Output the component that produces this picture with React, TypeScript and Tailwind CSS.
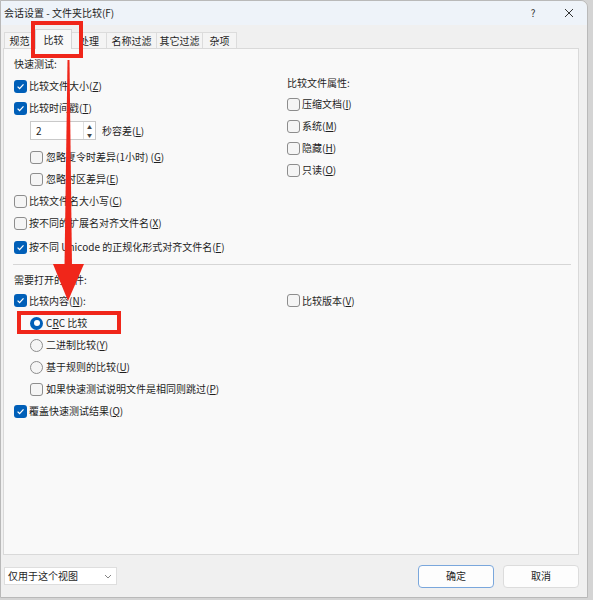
import type { ReactNode } from "react";

function Box({ checked }: { checked?: boolean }) {
    if (checked) {
        return (
            <span className="flex h-[13px] w-[13px] shrink-0 items-center justify-center rounded-[3px] bg-[#005fb8]">
                <svg width="9" height="9" viewBox="0 0 9 9">
                    <path d="M1.6 4.6 L3.6 6.6 L7.5 2.4" fill="none" stroke="white" strokeWidth="1.3" />
                </svg>
            </span>
        );
    }
    return <span className="h-[13px] w-[13px] shrink-0 rounded-[3px] border border-[#8d8d8d] bg-[#f5f5f5]" />;
}

function Radio({ checked }: { checked?: boolean }) {
    if (checked) {
        return (
            <span className="flex h-[13px] w-[13px] shrink-0 items-center justify-center rounded-full bg-[#005fb8]">
                <span className="h-[6px] w-[6px] rounded-full bg-white" />
            </span>
        );
    }
    return <span className="h-[13px] w-[13px] shrink-0 rounded-full border border-[#8d8d8d] bg-[#f5f5f5]" />;
}

function Row({ children, h = "h-[22px]", indent = false, className = "" }: { children: ReactNode; h?: string; indent?: boolean; className?: string }) {
    return (
        <div className={`flex items-center gap-[2px] ${h} ${indent ? "pl-[16px]" : ""} ${className}`}>
            {children}
        </div>
    );
}

const U = ({ c }: { c: string }) => <span className="underline">{c}</span>;

const tabs = [
    { label: "规范", w: "w-[31px]" },
    { label: "比较", w: "w-[37px]", active: true },
    { label: "处理", w: "w-[35px]" },
    { label: "名称过滤", w: "w-[50px]" },
    { label: "其它过滤", w: "w-[46px]" },
    { label: "杂项", w: "w-[34px]" },
];

export default function App() {
    return (
        <div className="relative h-[600px] w-[593px] overflow-hidden bg-[#d4d4d4] font-['Noto_Sans_CJK_SC',sans-serif] text-[10px] leading-none text-[#1f1f1f]">
            <div className="flex h-[598px] w-[588px] flex-col rounded-tr-[7px] border border-[#b9b9b9] bg-[#f0f0f0]">
                {/* title bar */}
                <div className="flex h-[24px] items-center rounded-tr-[7px] bg-[#eef3f9] pl-[3px]">
                    <span>会话设置 - 文件夹比较(F)</span>
                    <span className="ml-auto flex w-[36px] justify-center text-[10px] text-[#333]">?</span>
                    <span className="flex w-[36px] justify-center">
                        <svg width="10" height="10" viewBox="0 0 10 10">
                            <path d="M1 1 L9 9 M9 1 L1 9" stroke="#333" strokeWidth="1" />
                        </svg>
                    </span>
                </div>

                {/* tabs */}
                <div className="flex h-[23px] items-end pl-[3px]">
                    {tabs.map((t) =>
                        t.active ? (
                            <div
                                key={t.label}
                                className={`relative z-10 -mb-px flex h-[20px] ${t.w} items-center justify-center border border-b-0 border-[#d5d5d5] bg-[#f9f9f9]`}
                            >
                                {t.label}
                            </div>
                        ) : (
                            <div
                                key={t.label}
                                className={`flex h-[16px] ${t.w} items-center justify-center border border-b-0 border-l-0 border-[#dcdcdc] bg-[#f4f4f4] first:border-l`}
                            >
                                {t.label}
                            </div>
                        )
                    )}
                </div>

                {/* panel */}
                <div className="ml-[2px] h-[507px] w-[576px] border border-[#d9d9d9] bg-[#f9f9f9]">
                    <div className="flex pl-[10px]">
                        <div className="w-[273px] pt-[4px]">
                            <Row>快速测试:</Row>
                            <Row>
                                <Box checked />
                                <span>比较文件大小(<U c="Z" />)</span>
                            </Row>
                            <Row>
                                <Box checked />
                                <span>比较时间戳(<U c="T" />)</span>
                            </Row>
                            <div className="flex items-center py-[2px] pl-[16px]">
                                <div className="flex h-[19px] w-[66px] items-stretch border border-[#c9c9c9] bg-white">
                                    <span className="flex flex-1 items-center pl-[5px] text-[10px]">2</span>
                                    <span className="flex w-[12px] flex-col border-l border-[#e0e0e0]">
                                        <span className="flex flex-1 items-center justify-center text-[5px] text-[#444]">▲</span>
                                        <span className="flex flex-1 items-center justify-center text-[5px] text-[#444]">▼</span>
                                    </span>
                                </div>
                                <span className="ml-[6px]">秒容差(<U c="L" />)</span>
                            </div>
                            <Row indent className="mt-[4px]">
                                <Box />
                                <span className="ml-[1px]">忽略夏令时差异(1小时) (<U c="G" />)</span>
                            </Row>
                            <Row indent>
                                <Box />
                                <span className="ml-[1px]">忽略时区差异(<U c="E" />)</span>
                            </Row>
                            <Row>
                                <Box />
                                <span>比较文件名大小写(<U c="C" />)</span>
                            </Row>
                            <Row>
                                <Box />
                                <span>按不同的扩展名对齐文件名(<U c="X" />)</span>
                            </Row>
                        </div>
                        <div className="pt-[24px]">
                            <Row h="h-[20px]">比较文件属性:</Row>
                            <Row>
                                <Box />
                                <span>压缩文档(<U c="I" />)</span>
                            </Row>
                            <Row>
                                <Box />
                                <span>系统(<U c="M" />)</span>
                            </Row>
                            <Row>
                                <Box />
                                <span>隐藏(<U c="H" />)</span>
                            </Row>
                            <Row>
                                <Box />
                                <span>只读(<U c="O" />)</span>
                            </Row>
                        </div>
                    </div>
                    <div className="pl-[10px] pt-[2px]">
                        <Row>
                            <Box checked />
                            <span className="whitespace-nowrap">按不同 Unicode 的正规化形式对齐文件名(<U c="F" />)</span>
                        </Row>
                    </div>

                    <div className="mr-[7px] ml-[9px] mt-[6px] h-px bg-[#d6d6d6]" />

                    <div className="flex pl-[10px] pt-[5px]">
                        <div className="w-[273px]">
                            <Row h="h-[20px]">需要打开的文件:</Row>
                            <Row h="h-[21px]">
                                <Box checked />
                                <span>比较内容(<U c="N" />):</span>
                            </Row>
                            <Row indent className="mt-[1px]">
                                <Radio checked />
                                <span className="ml-[1px]">C<U c="R" />C 比较</span>
                            </Row>
                            <Row indent>
                                <Radio />
                                <span className="ml-[1px]">二进制比较(<U c="Y" />)</span>
                            </Row>
                            <Row indent>
                                <Radio />
                                <span className="ml-[1px]">基于规则的比较(<U c="U" />)</span>
                            </Row>
                            <Row indent>
                                <Box />
                                <span className="ml-[1px] whitespace-nowrap">如果快速测试说明文件是相同则跳过(<U c="P" />)</span>
                            </Row>
                            <Row>
                                <Box checked />
                                <span>覆盖快速测试结果(<U c="Q" />)</span>
                            </Row>
                        </div>
                        <div className="pt-[20px]">
                            <Row h="h-[21px]">
                                <Box />
                                <span>比较版本(<U c="V" />)</span>
                            </Row>
                        </div>
                    </div>
                </div>

                {/* bottom bar */}
                <div className="flex flex-1 items-center pl-[3px] pr-[8px]">
                    <div className="flex h-[18px] w-[113px] items-center border border-[#dedede] bg-white pl-[3px] pr-[4px]">
                        <span>仅用于这个视图</span>
                        <svg className="ml-auto" width="8" height="5" viewBox="0 0 8 5">
                            <path d="M1 1 L4 4 L7 1" fill="none" stroke="#777" strokeWidth="0.9" />
                        </svg>
                    </div>
                    <div className="ml-auto flex gap-[9px]">
                        <div className="flex h-[23px] w-[76px] items-center justify-center rounded-[4px] border-[1.5px] border-[#7aa7dc] bg-[#fdfdfd]">
                            确定
                        </div>
                        <div className="flex h-[23px] w-[76px] items-center justify-center rounded-[4px] border border-[#dcdcdc] bg-[#fdfdfd]">
                            取消
                        </div>
                    </div>
                </div>
            </div>

            {/* red annotations */}
            <div className="pointer-events-none absolute left-[31px] top-[21px] h-[37px] w-[52px] border-[4px] border-[#f0261a]" />
            <div className="pointer-events-none absolute left-[17px] top-[311px] h-[23px] w-[104px] border-[4px] border-[#f0261a]" />
            <svg className="pointer-events-none absolute left-0 top-0" width="593" height="600" viewBox="0 0 593 600">
                <polygon points="67.5,60 69.5,60 72,266 64.5,266" fill="#f0261a" />
                <polygon points="53,264 84,264 68,301" fill="#f0261a" />
            </svg>
        </div>
    );
}
